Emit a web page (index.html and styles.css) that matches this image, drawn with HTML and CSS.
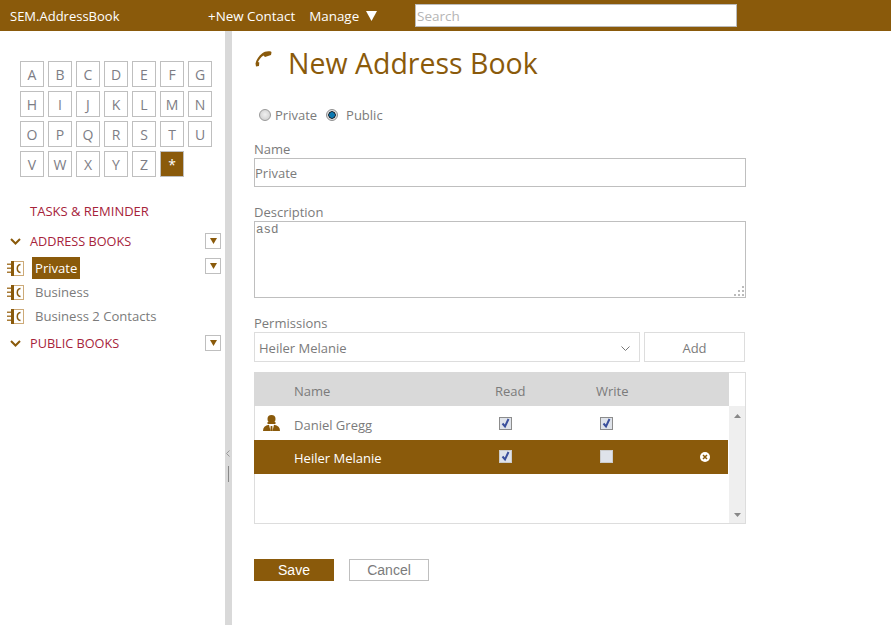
FILE: index.html
```html
<!DOCTYPE html>
<html lang="en">
<head>
    <meta charset="UTF-8">
    <title>SEM.AddressBook</title>
    <link rel="stylesheet" href="styles.css">
</head>
<body>
    <header class="topbar">
        <span class="brand">SEM.AddressBook</span>
        <nav class="topnav">
            <a class="new-contact">+New Contact</a>
            <a class="manage">Manage <svg class="manage-arrow" width="11" height="10" viewBox="0 0 11 10"><path d="M0 0h11L5.500 10z" fill="#fff"/></svg></a>
        </nav>
        <input class="search" type="text" placeholder="Search">
    </header>

    <div class="layout">
        <aside class="sidebar">
            <div class="letters">
                <a class="letter">A</a><a class="letter">B</a><a class="letter">C</a><a class="letter">D</a><a class="letter">E</a><a class="letter">F</a><a class="letter">G</a>
                <a class="letter">H</a><a class="letter">I</a><a class="letter">J</a><a class="letter">K</a><a class="letter">L</a><a class="letter">M</a><a class="letter">N</a>
                <a class="letter">O</a><a class="letter">P</a><a class="letter">Q</a><a class="letter">R</a><a class="letter">S</a><a class="letter">T</a><a class="letter">U</a>
                <a class="letter">V</a><a class="letter">W</a><a class="letter">X</a><a class="letter">Y</a><a class="letter">Z</a><a class="letter active">*</a>
            </div>

            <div class="tasks">TASKS &amp; REMINDER</div>

            <div class="section address-section">
                <svg class="chevron" width="11" height="7" viewBox="0 0 11 7"><path d="M1 1l4.500 4.500L10 1" fill="none" stroke="#8a5a0b" stroke-width="2"/></svg>
                <span class="section-title">ADDRESS BOOKS</span>
                <span class="drop"><svg width="7" height="6" viewBox="0 0 7 6"><path d="M0 0h7L3.500 6z" fill="#8a5a0b"/></svg></span>
            </div>

            <div class="book selected-book">
                <svg class="book-icon" width="17" height="15" viewBox="0 0 17 15"><rect x="6.500" y=".5" width="10" height="14" fill="#fff" stroke="#cdaa78"/><path d="M0 2.500h4v1.500H0zM0 6.500h4V8H0zM0 10.500h4V12H0z" fill="#a97c38"/><path d="M4 0h3v15H4z" fill="#8a5a0b"/><path d="M13.500 3.500C11 3.800 10.300 5.500 10.300 7.500s.7 3.700 3.200 4" fill="none" stroke="#8a5a0b" stroke-width="1.500"/></svg>
                <span class="book-name">Private</span>
                <span class="drop"><svg width="7" height="6" viewBox="0 0 7 6"><path d="M0 0h7L3.500 6z" fill="#8a5a0b"/></svg></span>
            </div>
            <div class="book">
                <svg class="book-icon" width="17" height="15" viewBox="0 0 17 15"><rect x="6.500" y=".5" width="10" height="14" fill="#fff" stroke="#cdaa78"/><path d="M0 2.500h4v1.500H0zM0 6.500h4V8H0zM0 10.500h4V12H0z" fill="#a97c38"/><path d="M4 0h3v15H4z" fill="#8a5a0b"/><path d="M13.500 3.500C11 3.800 10.300 5.500 10.300 7.500s.7 3.700 3.200 4" fill="none" stroke="#8a5a0b" stroke-width="1.500"/></svg>
                <span class="book-name">Business</span>
            </div>
            <div class="book">
                <svg class="book-icon" width="17" height="15" viewBox="0 0 17 15"><rect x="6.500" y=".5" width="10" height="14" fill="#fff" stroke="#cdaa78"/><path d="M0 2.500h4v1.500H0zM0 6.500h4V8H0zM0 10.500h4V12H0z" fill="#a97c38"/><path d="M4 0h3v15H4z" fill="#8a5a0b"/><path d="M13.500 3.500C11 3.800 10.300 5.500 10.300 7.500s.7 3.700 3.200 4" fill="none" stroke="#8a5a0b" stroke-width="1.500"/></svg>
                <span class="book-name">Business 2 Contacts</span>
            </div>

            <div class="section public-section">
                <svg class="chevron" width="11" height="7" viewBox="0 0 11 7"><path d="M1 1l4.500 4.500L10 1" fill="none" stroke="#8a5a0b" stroke-width="2"/></svg>
                <span class="section-title">PUBLIC BOOKS</span>
                <span class="drop"><svg width="7" height="6" viewBox="0 0 7 6"><path d="M0 0h7L3.500 6z" fill="#8a5a0b"/></svg></span>
            </div>
        </aside>

        <div class="splitter">
            <svg class="splitter-arrow" width="4" height="7" viewBox="0 0 4 7"><path d="M3.500.5L.5 3.500l3 3" fill="none" stroke="#999"/></svg>
            <span class="splitter-line"></span>
        </div>

        <main class="content">
            <div class="title-row">
                <svg class="title-icon" width="17" height="16" viewBox="0 0 17 16"><path d="M16.500 1.500L16 .4C12 -.3 9.500 .5 7 2.500 3.800 5 1.500 8.500 .5 12.500L1 15.500l3-.5.300-3.500-1.300-.5C4 8.500 6 6 8.500 4.500l1.500 1.500 6-2z" fill="#8a5a0b"/></svg>
                <h1>New Address Book</h1>
            </div>

            <div class="radios">
                <span class="radio"></span><span class="radio-label">Private</span>
                <span class="radio on"></span><span class="radio-label">Public</span>
            </div>

            <label class="field-label">Name</label>
            <input class="text-input" type="text" value="Private">

            <label class="field-label desc-label">Description</label>
            <div class="textarea-wrap">
                <textarea class="desc">asd</textarea>
                <svg class="grip" width="12" height="12" viewBox="0 0 12 12"><path d="M9 0h2v2H9zM5 4h2v2H5zM9 4h2v2H9zM1 8h2v2H1zM5 8h2v2H5zM9 8h2v2H9z" fill="#bbb"/></svg>
            </div>

            <label class="field-label perm-label">Permissions</label>
            <div class="perm-row">
                <div class="select">
                    <span>Heiler Melanie</span>
                    <svg width="9" height="5" viewBox="0 0 9 5"><path d="M.5.5l4 4 4-4" fill="none" stroke="#777"/></svg>
                </div>
                <button class="add-btn">Add</button>
            </div>

            <div class="grid">
                <div class="grid-main">
                    <div class="row head">
                        <span class="c-name">Name</span><span class="c-read">Read</span><span class="c-write">Write</span>
                    </div>
                    <div class="row">
                        <svg class="user-icon" width="17" height="16" viewBox="0 0 17 16"><circle cx="8.500" cy="4" r="4" fill="#8a5a0b"/><path d="M4.500 7h8v2h-8z" fill="#8a5a0b"/><path d="M0 16c0-3.500 2-5.500 6-6.200L7.500 16zM17 16c0-3.500-2-5.500-6-6.200L9.500 16z" fill="#8a5a0b"/><path d="M7.700 11h1.600l.4 5H7.300z" fill="#8a5a0b"/></svg>
                        <span class="c-name">Daniel Gregg</span>
                        <span class="c-read"><span class="check on"><svg width="11" height="11" viewBox="0 0 11 11"><path d="M2.500 5.500l2.500 3L8.500 1" fill="none" stroke="#3a4f9c" stroke-width="2"/></svg></span></span>
                        <span class="c-write"><span class="check on"><svg width="11" height="11" viewBox="0 0 11 11"><path d="M2.500 5.500l2.500 3L8.500 1" fill="none" stroke="#3a4f9c" stroke-width="2"/></svg></span></span>
                    </div>
                    <div class="row picked">
                        <span class="c-name">Heiler Melanie</span>
                        <span class="c-read"><span class="check on"><svg width="11" height="11" viewBox="0 0 11 11"><path d="M2.500 5.500l2.500 3L8.500 1" fill="none" stroke="#3a4f9c" stroke-width="2"/></svg></span></span>
                        <span class="c-write"><span class="check"></span></span>
                        <svg class="remove" width="10" height="10" viewBox="0 0 10 10"><circle cx="5" cy="5" r="5" fill="#fff"/><path d="M3 3l4 4M7 3L3 7" stroke="#8a5a0b" stroke-width="1.500"/></svg>
                    </div>
                </div>
                <div class="scroll-col">
                    <div class="scroll-top"></div>
                    <div class="scrollbar">
                        <svg width="7" height="4" viewBox="0 0 7 4"><path d="M0 4L3.500 0 7 4z" fill="#888"/></svg>
                        <svg width="7" height="4" viewBox="0 0 7 4"><path d="M0 0l3.500 4L7 0z" fill="#888"/></svg>
                    </div>
                </div>
            </div>

            <div class="actions">
                <button class="save">Save</button>
                <button class="cancel">Cancel</button>
            </div>
        </main>
    </div>
</body>
</html>
```

FILE: styles.css
```css
* {
    box-sizing: border-box;
}

html, body {
    height: 100%;
}

body {
    margin: 0;
    font-family: 'Open Sans', 'Noto Sans', sans-serif;
    font-size: 13px;
    color: #7b7b7b;
    background-color: #fff;
    overflow: hidden;
    display: flex;
    flex-direction: column;
}

/* top bar */
.topbar {
    height: 31px;
    flex: none;
    background-color: #8a5a0b;
    color: #fff;
    display: flex;
    align-items: center;
    padding-left: 10px;
}

.brand {
    width: 198px;
    font-size: 13px;
}

.topnav {
    display: flex;
    gap: 14px;
    width: 207px;
    font-size: 13.400px;
}

.manage-arrow {
    margin-left: 3px;
}

.search {
    width: 322px;
    height: 23px;
    border: 1px solid #bbb;
    padding: 1px 1px;
    font-family: inherit;
    font-size: 13.500px;
    background-color: #fff;
}

.search::placeholder {
    color: #b5b5b5;
    opacity: 1;
}

.layout {
    flex: 1;
    display: flex;
    min-height: 0;
}

/* sidebar */
.sidebar {
    width: 225px;
    flex: none;
    padding-top: 30px;
}

.letters {
    display: grid;
    grid-template-columns: repeat(7, 24px);
    grid-auto-rows: 26px;
    gap: 4px;
    margin-left: 20px;
}

.letter {
    border: 1px solid #bfbfbf;
    display: flex;
    align-items: center;
    justify-content: center;
    font-size: 14px;
    color: #7d7d85;
}

.letter.active {
    background-color: #8a5a0b;
    color: #fff;
}

.tasks {
    margin: 26px 0 0 30px;
    font-size: 13px;
    line-height: 16px;
    color: #a6233a;
}

.section {
    display: flex;
    align-items: center;
    height: 16px;
    padding-left: 10px;
}

.address-section {
    margin-top: 14px;
}

.public-section {
    margin-top: 8px;
}

.section-title {
    margin-left: 9px;
    font-size: 12.700px;
    color: #a6233a;
    flex: 1;
}

.drop {
    width: 16px;
    height: 16px;
    border: 1px solid #bfbfbf;
    margin-right: 4px;
    display: flex;
    align-items: center;
    justify-content: center;
    background-color: #fff;
}

.book {
    display: flex;
    align-items: center;
    height: 22px;
    padding-left: 7px;
    margin-bottom: 2px;
    font-size: 13.100px;
}

.selected-book {
    margin-top: 8px;
}

.book-icon {
    flex: none;
}

.book-name {
    margin-left: 8px;
    padding: 0 3px;
    height: 22px;
    line-height: 22px;
}

.selected-book .book-name {
    background-color: #8a5a0b;
    color: #fff;
}

.selected-book .drop {
    margin-left: auto;
    margin-top: -5px;
}

/* splitter between sidebar and form */
.splitter {
    width: 7px;
    flex: none;
    background-color: #d9d9d9;
    position: relative;
}

.splitter-arrow {
    position: absolute;
    left: 1px;
    top: 419px;
}

.splitter-line {
    position: absolute;
    left: 3px;
    top: 435px;
    width: 1px;
    height: 16px;
    background-color: #888;
}

/* form */
.content {
    flex: 1;
    padding: 0 0 0 22px;
}

.title-row {
    display: flex;
    align-items: center;
    height: 40px;
    margin-top: 12px;
}

.title-icon {
    margin: 0 0 8px 1px;
}

h1 {
    margin: 0 0 0 16px;
    font-size: 28.500px;
    font-weight: 400;
    color: #8a5a0b;
}

.radios {
    display: flex;
    align-items: center;
    height: 20px;
    margin: 22px 0 0 5px;
    font-size: 13px;
}

.radio {
    width: 12px;
    height: 12px;
    border-radius: 50%;
    border: 1px solid #999;
    background: radial-gradient(circle at 50% 45%, #f0f0f0, #c8c8c8);
}

.radio.on {
    border-color: #8f8f8f;
    background: radial-gradient(circle, #0a78b0 0 2.500px, #1f2f3d 3px 3.500px, #dcdcdc 4px);
}

.radio-label {
    margin: 0 9px 0 4px;
}

.radio.on + .radio-label {
    margin-left: 8px;
}

.field-label {
    display: block;
    font-size: 13px;
    line-height: 18px;
    margin-top: 15px;
}

.desc-label {
    margin-top: 16px;
}

.perm-label {
    margin-top: 16px;
}

.text-input {
    display: block;
    width: 492px;
    height: 29px;
    border: 1px solid #bfbfbf;
    padding: 1px 0 0;
    font-family: inherit;
    font-size: 13px;
    color: #7b7b7b;
}

.textarea-wrap {
    position: relative;
    width: 492px;
    height: 77px;
}

.desc {
    display: block;
    width: 100%;
    height: 100%;
    border: 1px solid #bfbfbf;
    padding: 1px;
    resize: none;
    font-family: 'Liberation Mono', monospace;
    font-size: 12.500px;
    color: #7b7b7b;
}

.grip {
    position: absolute;
    right: 1px;
    bottom: 0;
}

.perm-row {
    display: flex;
    gap: 4px;
    height: 30px;
    width: 491px;
}

.select {
    width: 386px;
    border: 1px solid #ddd;
    display: flex;
    align-items: center;
    justify-content: space-between;
    padding: 2px 9px 0 4px;
}

.add-btn {
    width: 101px;
    border: 1px solid #ddd;
    background-color: #fff;
    font-family: inherit;
    font-size: 13px;
    color: #7b7b7b;
    padding: 2px 0 0;
}

/* permissions table */
.grid {
    display: flex;
    width: 492px;
    height: 152px;
    margin-top: 10px;
    border: 1px solid #ddd;
    border-top: 0;
    border-left: 1px solid #ddd;
}

.grid-main {
    flex: 1;
    margin-right: 1px;
}

.row {
    display: flex;
    align-items: center;
    height: 34px;
    padding-top: 3px;
    position: relative;
    margin-left: -1px;
}

.row.head {
    background-color: #d9d9d9;
    margin-right: -1px;
}

.c-name {
    margin-left: 40px;
    width: 201px;
}

.c-read {
    width: 101px;
    display: flex;
}

.c-write {
    display: flex;
}

.user-icon {
    position: absolute;
    left: 9px;
    top: 9px;
}

.row.picked {
    background-color: #8a5a0b;
    color: #fff;
    padding-top: 1px;
}

.row .check {
    margin: -2px 0 0 4px;
}

.row.picked .check {
    margin-top: -2px;
}

.check {
    width: 13px;
    height: 13px;
    border: 1px solid #8c8c8c;
    background-color: #dfe3ea;
    display: flex;
    align-items: center;
    justify-content: center;
}

.picked .check {
    border-color: #ccc;
}

.remove {
    position: absolute;
    right: 18px;
    top: 12px;
}

.scroll-col {
    width: 16px;
    flex: none;
    display: flex;
    flex-direction: column;
}

.scroll-top {
    height: 34px;
    background-color: #fff;
    border-top: 1px solid #ddd;
}

.scrollbar {
    flex: 1;
    background-color: #efefef;
    display: flex;
    flex-direction: column;
    justify-content: space-between;
    align-items: center;
    padding: 8px 0 6px;
}

.actions {
    display: flex;
    gap: 15px;
    margin-top: 35px;
}

.actions button {
    width: 80px;
    height: 22px;
    font-family: 'Liberation Sans', sans-serif;
    font-size: 14px;
    padding: 0;
}

.save {
    background-color: #8a5a0b;
    color: #fff;
    border: 0;
}

.cancel {
    background-color: #fff;
    color: #7b7b7b;
    border: 1px solid #bfbfbf;
}
```
